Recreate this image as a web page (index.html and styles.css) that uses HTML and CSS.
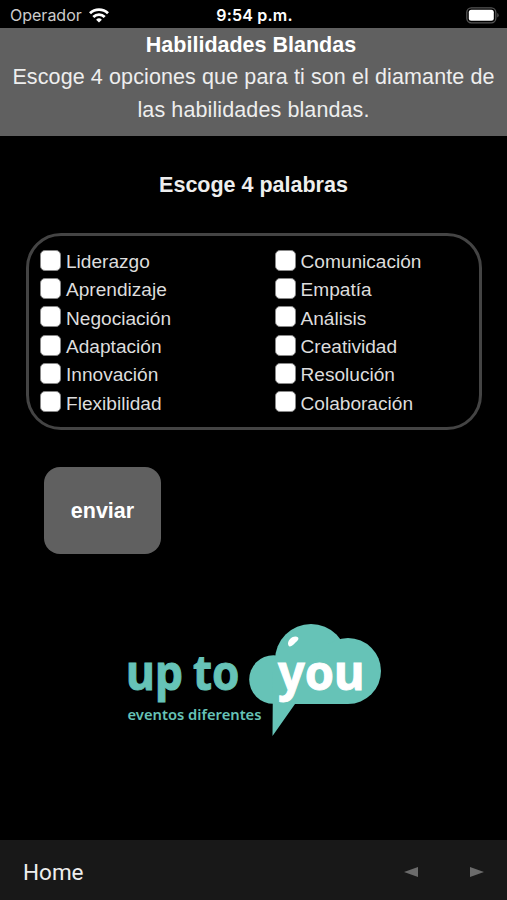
FILE: index.html
```html
<!DOCTYPE html>
<html lang="es">
<head>
<meta charset="UTF-8" />
<meta name="viewport" content="width=device-width, initial-scale=1" />
<title>Habilidades Blandas</title>
<link rel="stylesheet" href="styles.css">
</head>
<body>
  <div class="status-bar">
    <div class="carrier">
      <span>Operador</span>
      <svg width="20" height="15" viewBox="0 0 20 15" fill="none" stroke="#fff" stroke-width="2.8">
        <path d="M1 5.3a12.8 12.8 0 0 1 18 0" />
        <path d="M4.3 8.9a8.1 8.1 0 0 1 11.4 0" />
        <path d="M10 14.6l-2.9-2.9a4.1 4.1 0 0 1 5.8 0z" fill="#fff" stroke="none" />
      </svg>
    </div>
    <span class="clock">9:54 p.m.</span>
    <svg class="battery" width="33" height="17" viewBox="0 0 33 17">
      <rect x=".8" y=".8" width="29" height="15" rx="4.5" fill="none" stroke="#555" stroke-width="1.3" />
      <rect x="2.8" y="2.8" width="25" height="11" rx="2.5" fill="#fff" />
      <path d="M31.3 6v4.6q1.3-.6 1.3-2.3t-1.3-2.3z" fill="#555" />
    </svg>
  </div>

  <header class="header">
    <h1>Habilidades Blandas</h1>
    <p>Escoge 4 opciones que para ti son el diamante de las habilidades blandas.</p>
  </header>

  <main>
    <h2>Escoge 4 palabras</h2>
    <form>
      <div class="options">
        <div class="column">
          <label><input type="checkbox">Liderazgo</label>
          <label><input type="checkbox">Aprendizaje</label>
          <label><input type="checkbox">Negociación</label>
          <label><input type="checkbox">Adaptación</label>
          <label><input type="checkbox">Innovación</label>
          <label><input type="checkbox">Flexibilidad</label>
        </div>
        <div class="column">
          <label><input type="checkbox">Comunicación</label>
          <label><input type="checkbox">Empatía</label>
          <label><input type="checkbox">Análisis</label>
          <label><input type="checkbox">Creatividad</label>
          <label><input type="checkbox">Resolución</label>
          <label><input type="checkbox">Colaboración</label>
        </div>
      </div>
      <button type="button" class="send">enviar</button>
    </form>

    <svg class="logo" width="262" height="120" viewBox="122 620 262 120">
      <g fill="#66c3b7">
        <circle cx="273.5" cy="679.5" r="24.3" />
        <circle cx="311" cy="660" r="36" />
        <circle cx="348" cy="671" r="33" />
        <path d="M273 670h75v34h-53L272.500 736z" />
        <text class="logo-word" stroke="#66c3b7" x="126" y="690" textLength="57" lengthAdjust="spacingAndGlyphs">up</text>
        <text class="logo-word" stroke="#66c3b7" x="193" y="690" textLength="46.5" lengthAdjust="spacingAndGlyphs">to</text>
        <text class="logo-tagline" x="127.5" y="720" textLength="134" lengthAdjust="spacingAndGlyphs">eventos diferentes</text>
      </g>
      <path d="M288.300 645c-1.300-3.500 2.500-8.500 7.200-8.500 4.200.2 3.500 3.500.5 5.500-2.500 3-6.500 6.500-7.700 3z" fill="#fff" />
      <text class="logo-word" fill="#fff" stroke="#fff" x="278" y="689.5" textLength="86.500" lengthAdjust="spacingAndGlyphs">you</text>
    </svg>
  </main>

  <footer class="toolbar">
    <span>Home</span>
    <div class="arrows">
      <svg width="14" height="10" viewBox="0 0 14 10"><path d="M0 5L14 0v10z" /></svg>
      <svg width="14" height="10" viewBox="0 0 14 10"><path d="M14 5L0 0v10z" /></svg>
    </div>
  </footer>
</body>
</html>
```

FILE: styles.css
```css
* {
  box-sizing: border-box;
}
body {
  margin: 0;
  height: 900px;
  background: #000;
  color: #eee;
  font-family: "Liberation Sans", Arial, sans-serif;
  display: flex;
  flex-direction: column;
}
h1, h2, p {
  margin: 0;
}
svg {
  display: block;
}

/* Status bar */
.status-bar {
  display: grid;
  grid-template-columns: 1fr auto 1fr;
  align-items: center;
  height: 28px;
  padding: 2px 8px 0 10px;
  font-family: Inter, sans-serif;
  font-size: 16px;
}
.carrier {
  display: flex;
  align-items: center;
  gap: 7px;
  color: #ccc;
}
.clock {
  color: #fff;
  font-weight: 600;
  letter-spacing: 0.2px;
}
.battery {
  justify-self: end;
}

/* Header */
.header {
  height: 108px;
  padding: 1px 8px 0;
  background: #606060;
  text-align: center;
  font-size: 21.5px;
  line-height: 32.4px;
}
.header h1 {
  padding-right: 5px;
  font-size: 21.5px;
  color: #fff;
}
.header p {
  letter-spacing: 0.11px;
}

/* Form */
main {
  flex: 1;
}
h2 {
  padding-top: 33px;
  text-align: center;
  font-size: 21.5px;
  line-height: 32px;
}
.options {
  display: grid;
  grid-template-columns: 234.5px 1fr;
  width: 456px;
  height: 197px;
  margin: 32px 0 0 26px;
  padding: 12px 0 0 11px;
  border: 3px solid #444;
  border-radius: 35px;
}
label {
  display: flex;
  align-items: center;
  height: 28.3px;
  font-size: 19.1px;
  color: #ddd;
}
input {
  appearance: none;
  width: 21px;
  height: 21px;
  margin: 0 5px 4px 0;
  background: #fff;
  border: 1px solid #888;
  border-radius: 5px;
}
.send {
  display: block;
  width: 117px;
  height: 87px;
  margin: 37px 0 0 44px;
  padding: 1px 0 0;
  background: #606060;
  border: none;
  border-radius: 16px;
  color: #fff;
  font: bold 21.5px "Liberation Sans", Arial, sans-serif;
}

/* Logo */
.logo {
  margin: 66px 0 0 122px;
}
.logo-word {
  font: bold 48px "Noto Sans", sans-serif;
  stroke-width: 1;
}
.logo-tagline {
  font: 600 14.5px "Noto Sans", sans-serif;
}

/* Bottom toolbar */
.toolbar {
  display: flex;
  align-items: center;
  justify-content: space-between;
  height: 60px;
  padding: 3px 23px 0;
  background: #181818;
  font-family: Roboto, sans-serif;
  font-size: 22.5px;
}
.arrows {
  display: flex;
  gap: 52px;
  fill: #6b6b6b;
}
```
